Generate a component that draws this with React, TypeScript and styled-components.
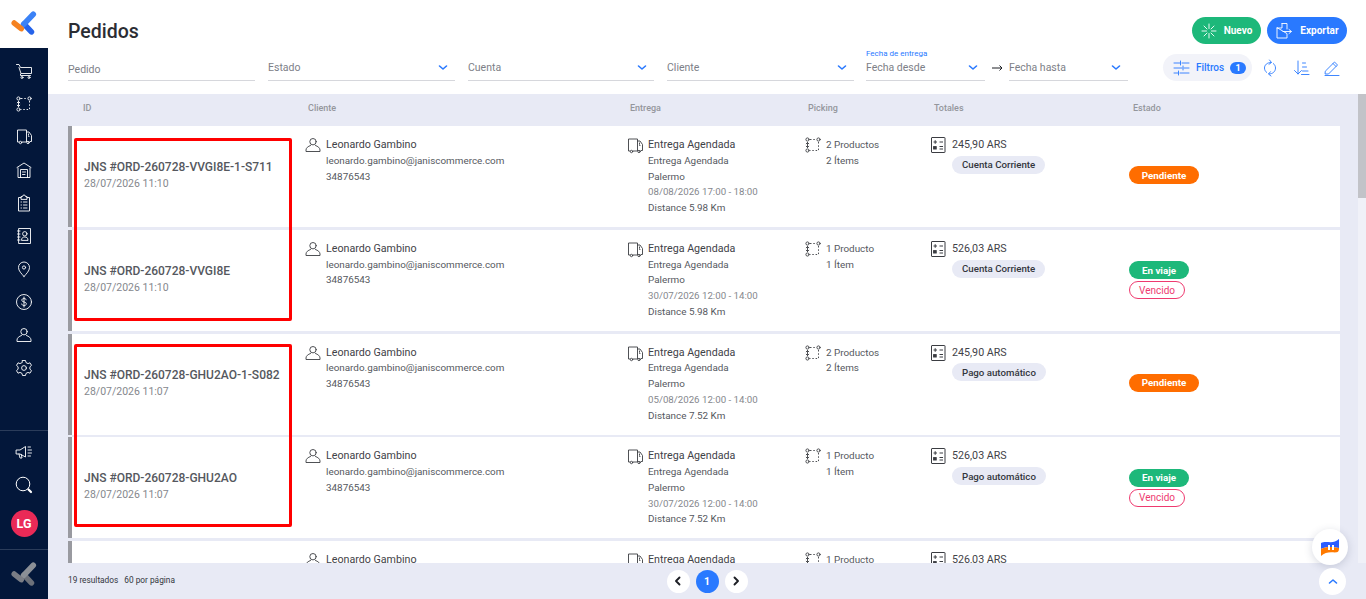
import React from 'react';
import styled, { createGlobalStyle } from 'styled-components';

const GlobalStyle = createGlobalStyle`
  html, body { margin: 0; padding: 0; height: 100%; overflow: hidden; }
  body { font-family: Roboto, "Liberation Sans", sans-serif; color: #55585e; background: #fff; }
  * { box-sizing: border-box; }
`;

interface Order {
  id: string;
  date: string;
  place: string;
  slot: string;
  km: string;
  products: string;
  items: string;
  total: string;
  payment: string;
  status: 'Pendiente' | 'En viaje';
  expired?: boolean;
}

const groups: Order[][] = [
  [
    { id: 'JNS #ORD-260728-VVGI8E-1-S711', date: '28/07/2026 11:10', place: 'Palermo', slot: '08/08/2026 17:00 - 18:00', km: 'Distance 5.98 Km', products: '2 Productos', items: '2 Ítems', total: '245,90 ARS', payment: 'Cuenta Corriente', status: 'Pendiente' },
    { id: 'JNS #ORD-260728-VVGI8E', date: '28/07/2026 11:10', place: 'Palermo', slot: '30/07/2026 12:00 - 14:00', km: 'Distance 5.98 Km', products: '1 Producto', items: '1 Ítem', total: '526,03 ARS', payment: 'Cuenta Corriente', status: 'En viaje', expired: true },
  ],
  [
    { id: 'JNS #ORD-260728-GHU2AO-1-S082', date: '28/07/2026 11:07', place: 'Palermo', slot: '05/08/2026 12:00 - 14:00', km: 'Distance 7.52 Km', products: '2 Productos', items: '2 Ítems', total: '245,90 ARS', payment: 'Pago automático', status: 'Pendiente' },
    { id: 'JNS #ORD-260728-GHU2AO', date: '28/07/2026 11:07', place: 'Palermo', slot: '30/07/2026 12:00 - 14:00', km: 'Distance 7.52 Km', products: '1 Producto', items: '1 Ítem', total: '526,03 ARS', payment: 'Pago automático', status: 'En viaje', expired: true },
  ],
];

const lastOrder: Order = { id: 'JNS #ORD-260728-QWE4RT', date: '28/07/2026 11:02', place: 'Palermo', slot: '30/07/2026 12:00 - 14:00', km: 'Distance 7.52 Km', products: '1 Producto', items: '1 Ítem', total: '526,03 ARS', payment: 'Pago automático', status: 'En viaje' };

const Page = styled.div`
  display: flex;
  height: 100vh;
  width: 100vw;
`;

const Sidebar = styled.nav`
  width: 48px;
  flex: none;
  display: flex;
  flex-direction: column;
  background: #03173a;
`;

const LogoBox = styled.div`
  height: 48px;
  flex: none;
  background: #fff;
  display: flex;
  align-items: center;
  justify-content: center;
`;

const NavList = styled.div`
  flex: 1;
  display: flex;
  flex-direction: column;
  align-items: center;
  padding-top: 6px;
`;

const NavItem = styled.div`
  height: 33px;
  width: 48px;
  flex: none;
  display: flex;
  align-items: center;
  justify-content: center;
  color: #fff;
`;

const NavBottom = styled.div`
  flex: none;
  height: 119px;
  border-top: 1px solid #2b3c5a;
  display: flex;
  flex-direction: column;
  align-items: center;
  padding-top: 4px;
`;

const Avatar = styled.div`
  width: 27px;
  height: 27px;
  margin-top: 9px;
  border-radius: 50%;
  background: #ea2a57;
  color: #fff;
  font-size: 12.5px;
  font-weight: 700;
  display: flex;
  align-items: center;
  justify-content: center;
`;

const NavFoot = styled.div`
  flex: none;
  height: 50px;
  border-top: 1px solid #2b3c5a;
  display: flex;
  align-items: center;
  justify-content: center;
`;

const Main = styled.main`
  flex: 1;
  min-width: 0;
  display: flex;
  flex-direction: column;
  position: relative;
`;

const Header = styled.header`
  height: 94px;
  flex: none;
  background: #fff;
  padding: 17px 19px 0 20px;
`;

const TitleRow = styled.div`
  display: flex;
  justify-content: space-between;
  align-items: center;
  height: 27px;
`;

const Title = styled.h1`
  margin: 0;
  padding-top: 1px;
  font-size: 19.5px;
  font-weight: 500;
  color: #2b2d33;
`;

const Actions = styled.div`
  display: flex;
  gap: 6px;
`;

const ActionButton = styled.button<{ $tone: string; $width: number }>`
  height: 27px;
  width: ${p => p.$width}px;
  border: 0;
  border-radius: 14px;
  background: ${p => p.$tone};
  color: #fff;
  font-family: inherit;
  font-size: 10px;
  font-weight: 700;
  display: flex;
  align-items: center;
  justify-content: center;
  gap: 7px;
  padding: 0;
`;

const FilterRow = styled.div`
  display: flex;
  align-items: flex-end;
  margin-top: 10px;
  height: 27px;
`;

const Field = styled.div<{ $width: number; $gap: number }>`
  position: relative;
  width: ${p => p.$width}px;
  margin-right: ${p => p.$gap}px;
  flex: none;
  height: 27px;
  border-bottom: 1px solid #d6d7dc;
  display: flex;
  align-items: center;
  justify-content: space-between;
  font-size: 10.5px;
  color: #7d8087;
  padding: 0 7px 0 0;
`;

const PlainValue = styled.span`
  padding-top: 4px;
`;

const FieldLabel = styled.span`
  position: absolute;
  left: 0;
  top: -5px;
  font-size: 8px;
  color: #2979ff;
  white-space: nowrap;
`;

const ArrowBox = styled.div`
  width: 24px;
  flex: none;
  height: 27px;
  display: flex;
  align-items: center;
  justify-content: flex-start;
  padding: 0 0 0 7px;
`;

const Tools = styled.div`
  margin: 2px 0 0 35px;
  display: flex;
  align-items: center;
  height: 27px;
`;

const FilterPill = styled.div`
  width: 89px;
  height: 27px;
  margin-right: -4px;
  border-radius: 14px;
  background: #f2f3f9;
  color: #2979ff;
  font-size: 10px;
  font-weight: 500;
  display: flex;
  align-items: center;
  padding-left: 10px;
  gap: 6px;
`;

const Count = styled.span`
  width: 16px;
  height: 12px;
  border-radius: 6px;
  background: #2979ff;
  color: #fff;
  font-size: 9px;
  font-weight: 700;
  display: flex;
  align-items: center;
  justify-content: center;
`;

const ToolIcon = styled.div`
  width: 18px;
  margin-left: 13px;
  display: flex;
  justify-content: center;
  color: #2979ff;
`;

const Body = styled.div`
  flex: 1;
  min-height: 0;
  display: flex;
  background: #e8eaf5;
`;

const Table = styled.div`
  flex: 1;
  min-width: 0;
  display: flex;
  flex-direction: column;
  padding: 0 18px 0 20px;
`;

const columns = '221px 322px 178px 126px 198px 1fr';

const HeadRow = styled.div`
  height: 32px;
  flex: none;
  display: grid;
  grid-template-columns: ${columns};
  align-items: center;
  padding: 0 0 5px 15px;
  font-size: 9px;
  font-weight: 500;
  color: #94969c;
`;

const HeadCell = styled.div<{ $pad: number }>`
  padding-left: ${p => p.$pad}px;
`;

const List = styled.div`
  flex: 1;
  min-height: 0;
  overflow: hidden;
`;

const RowGroup = styled.div`
  position: relative;
`;

const Highlight = styled.div<{ $top: number }>`
  position: absolute;
  left: 6px;
  top: ${p => p.$top}px;
  width: 218px;
  height: 183px;
  border: 3.5px solid #ff0000;
  border-radius: 2px;
  pointer-events: none;
`;

const Row = styled.div`
  height: 101px;
  margin-bottom: 2.75px;
  background: #fff;
  border-left: 4px solid #999aa0;
  display: grid;
  grid-template-columns: ${columns};
  padding-left: 12px;
`;

const IdCell = styled.div`
  display: flex;
  flex-direction: column;
  justify-content: center;
  padding-bottom: 3px;
`;

const OrderId = styled.div`
  font-size: 12px;
  font-weight: 500;
  line-height: 17px;
  color: #55585e;
  white-space: nowrap;
`;

const OrderDate = styled.div`
  font-size: 10.5px;
  line-height: 15px;
  color: #85878d;
`;

const InfoCell = styled.div`
  display: flex;
  padding-top: 11px;
  gap: 5px;
  color: #4d5056;
`;

const CellIcon = styled.div`
  width: 16px;
  flex: none;
  color: #3b3d42;
`;

const Lines = styled.div`
  display: flex;
  flex-direction: column;
  align-items: flex-start;
`;

const Line = styled.div<{ $muted?: boolean; $lead?: boolean }>`
  height: 15.75px;
  line-height: 15.75px;
  font-size: ${p => (p.$lead ? 10.7 : p.$muted ? 9.7 : 9.9)}px;
  color: ${p => (p.$muted ? '#85878d' : p.$lead ? '#3f4248' : '#55585e')};
  white-space: nowrap;
`;

const PayTag = styled.span`
  height: 18px;
  margin-top: 3px;
  padding: 0 10px;
  border-radius: 9px;
  background: #e8eaf5;
  color: #33363d;
  font-size: 9.7px;
  font-weight: 500;
  display: flex;
  align-items: center;
`;

const StatusCell = styled.div<{ $double?: boolean }>`
  display: flex;
  flex-direction: column;
  align-items: flex-start;
  justify-content: center;
  gap: 2px;
  padding-bottom: ${p => (p.$double ? 0 : 3)}px;
`;

const Badge = styled.span<{ $tone: string; $width: number }>`
  width: ${p => p.$width}px;
  height: 18px;
  border-radius: 9px;
  background: ${p => p.$tone};
  color: #fff;
  font-size: 9.8px;
  font-weight: 700;
  display: flex;
  align-items: center;
  justify-content: center;
`;

const Outline = styled.span`
  width: 56px;
  height: 18px;
  border-radius: 9px;
  border: 1px solid #ee3a6f;
  color: #ee3a6f;
  font-size: 10px;
  display: flex;
  align-items: center;
  justify-content: center;
`;

const Scrollbar = styled.div`
  width: 8px;
  flex: none;
  background: #f0f1f8;
`;

const Thumb = styled.div`
  height: 104px;
  background: #c2c3c8;
`;

const Footer = styled.footer`
  height: 36px;
  flex: none;
  background: #e8eaf5;
  padding: 0 20px;
  display: grid;
  grid-template-columns: 1fr auto 1fr;
  align-items: center;
`;

const Summary = styled.div`
  font-size: 8.3px;
  line-height: 12px;
  padding-bottom: 2px;
  color: #33363d;
  display: flex;
  gap: 6px;
`;

const Pager = styled.div`
  display: flex;
  align-items: center;
  gap: 6px;
`;

const PageButton = styled.div<{ $active?: boolean }>`
  width: 23px;
  height: 23px;
  border-radius: 50%;
  background: ${p => (p.$active ? '#2979ff' : '#fff')};
  color: ${p => (p.$active ? '#fff' : '#1d1f25')};
  font-size: 10.5px;
  font-weight: 700;
  display: flex;
  align-items: center;
  justify-content: center;
`;

const ChatBubble = styled.div`
  position: absolute;
  right: 18px;
  bottom: 34px;
  width: 36px;
  height: 36px;
  border-radius: 50%;
  background: #fff;
  box-shadow: 0 2px 8px rgba(40, 50, 90, 0.18);
  display: flex;
  align-items: center;
  justify-content: center;
`;

const TopButton = styled.div`
  position: absolute;
  right: 20px;
  bottom: 4px;
  width: 27px;
  height: 27px;
  border-radius: 50%;
  background: #fff;
  display: flex;
  align-items: center;
  justify-content: center;
`;

const Stroke = ({ size = 18, w, h, children }: { size?: number; w?: number; h?: number; children: React.ReactNode }) => (
  <svg width={w ?? size} height={h ?? size} viewBox={`0 0 ${w ?? size} ${h ?? size}`} fill="none" stroke="currentColor" strokeWidth="0.9" strokeLinecap="round" strokeLinejoin="round">
    {children}
  </svg>
);

const Logo = ({ gray }: { gray?: boolean }) => (
  <svg width="26" height="26" viewBox="0 0 28 28" fill="none" strokeLinecap="round" strokeWidth="6">
    <path d="M14 14 L22 22.5" stroke={gray ? '#6d717a' : '#2563ea'} />
    <path d="M24 3.5 L13.5 14.5" stroke={gray ? '#8b8f96' : '#3b82f6'} />
    <path d="M3.5 13 L11 19" stroke={gray ? '#7a7d85' : '#f58220'} />
  </svg>
);

const Cart = () => (
  <Stroke>
    <path d="M1.5 2.5 H4 L5.5 5.5 H16.5 V11.5 H6 L4 5.5" />
    <path d="M5.5 12 V13.5 H15.5" />
    <circle cx="7" cy="15.5" r="1" /><circle cx="14" cy="15.5" r="1" />
  </Stroke>
);

const Route = () => (
  <Stroke w={16} h={16}>
    <circle cx="2.5" cy="2.5" r="1.6" /><circle cx="13.5" cy="2.5" r="1.6" /><circle cx="2.5" cy="13.5" r="1.6" />
    <path d="M5 2.5 H11 M13.5 5 V13.5 H5" strokeDasharray="1.5 1.8" strokeLinecap="butt" />
    <path d="M2.5 5.5 V10.5 M1.2 6.8 L2.5 5.5 L3.8 6.8 M1.2 9.2 L2.5 10.5 L3.8 9.2" />
  </Stroke>
);

const Truck = () => (
  <Stroke w={17} h={17}>
    <path d="M3 14 H1.5 V2 H10.5 V14 H6" />
    <path d="M10.5 4 H13 L15.5 7.5 V13.5 H14" />
    <path d="M12.5 6 V8.5 H14" strokeDasharray="1 1" />
    <circle cx="4.5" cy="14.5" r="1.2" /><circle cx="12" cy="14.5" r="1.2" />
  </Stroke>
);

const Warehouse = () => (
  <Stroke>
    <path d="M2 6.5 L9 2 L16 6.5 M3 7 V16.5 H15 V7" />
    <path d="M5.5 16.5 V8.5 H12.5 V16.5 M7.5 11 H10.5 M7.5 13.5 H10" />
  </Stroke>
);

const Clipboard = () => (
  <Stroke>
    <path d="M6 3.5 H3.5 V17 H14.5 V3.5 H12" />
    <path d="M6 5 V2.5 H7.5 A1.5 1.5 0 0 1 10.5 2.5 H12 V5 Z" />
    <path d="M8.5 8 H12 M8.5 11 H12 M8.5 14 H12 M6 8 H6.5 M6 11 H6.5 M6 14 H6.5" />
  </Stroke>
);

const Contacts = () => (
  <Stroke>
    <path d="M4 1.5 H15.5 V16.5 H4 Z" />
    <path d="M2.5 4 H5 M2.5 7 H5 M2.5 10 H5 M2.5 13 H5" />
    <circle cx="9.8" cy="6.8" r="2.2" />
    <path d="M6.5 13 C6.5 10.8 8 10 9.8 10 C11.6 10 13 10.8 13 13 Z" />
  </Stroke>
);

const Pin = () => (
  <Stroke>
    <path d="M9 16.5 C6.5 13.5 3.5 11 3.5 7.5 A5.5 5.5 0 0 1 14.5 7.5 C14.5 11 11.5 13.5 9 16.5 Z" />
    <circle cx="9" cy="7.5" r="1.6" />
  </Stroke>
);

const Coin = () => (
  <Stroke>
    <circle cx="9" cy="9" r="7.5" />
    <path d="M11.2 6.8 C11 5.8 10 5.5 9 5.5 C7.8 5.5 6.8 6.1 6.8 7.2 C6.8 9.6 11.4 8.4 11.4 10.8 C11.4 12 10.2 12.5 9 12.5 C7.8 12.5 6.9 12 6.7 11 M9 4 V14" />
  </Stroke>
);

const Person = () => (
  <Stroke w={16} h={16}>
    <circle cx="8" cy="4.7" r="3.2" />
    <path d="M5.5 8.5 C3 9.3 1 11 1 13 V14.5 H15 V13 C15 11 13 9.3 10.5 8.5" />
  </Stroke>
);

const Gear = () => (
  <Stroke>
    <path d="M7.5 1.5 H10.5 L11 3.6 L13 4.6 L15 3.8 L16.5 6.4 L14.9 7.8 V10.2 L16.5 11.6 L15 14.2 L13 13.4 L11 14.4 L10.5 16.5 H7.5 L7 14.4 L5 13.4 L3 14.2 L1.5 11.6 L3.1 10.2 V7.8 L1.5 6.4 L3 3.8 L5 4.6 L7 3.6 Z" />
    <circle cx="9" cy="9" r="2.4" />
  </Stroke>
);

const Megaphone = () => (
  <Stroke>
    <path d="M1.5 7 H5 L10.5 3.5 V14 L5 11 H1.5 Z M4 11 L5 15 H7 L6.3 11.5" />
    <path d="M13 4 H15.5 M13 7 H16.5 M13 10 H16.5 M13 13 H15.5" />
  </Stroke>
);

const Search = () => (
  <svg width="18" height="18" viewBox="0 0 18 18" fill="none" stroke="currentColor">
    <circle cx="8" cy="8" r="6.8" strokeWidth="1" />
    <path d="M13.5 13.5 L16 16" strokeWidth="2.2" strokeLinecap="round" />
  </svg>
);

const Chevron = ({ up, color = '#2979ff', dir }: { up?: boolean; color?: string; dir?: 'l' | 'r' }) => {
  if (dir) {
    return (
      <svg width="8" height="10" viewBox="0 0 8 10" fill="none" stroke={color} strokeWidth="1.9" strokeLinecap="round" strokeLinejoin="round">
        <path d={dir === 'l' ? 'M5.5 1.5 L2 5 L5.5 8.5' : 'M2.5 1.5 L6 5 L2.5 8.5'} />
      </svg>
    );
  }
  return (
    <svg width="10" height="7" viewBox="0 0 10 7" fill="none" stroke={color} strokeWidth="1.6" strokeLinecap="round" strokeLinejoin="round">
      <path d={up ? 'M1.5 5 L5 2 L8.5 5' : 'M1.5 2 L5 5 L8.5 2'} />
    </svg>
  );
};

const Spark = () => (
  <Stroke w={16} h={16}>
    <path d="M8 1 V5.5 M8 10.5 V15 M1 8 H5.5 M10.5 8 H15 M3 3 L6 6 M10 10 L13 13 M13 3 L10 6 M6 10 L3 13" />
  </Stroke>
);

const ExportIcon = () => (
  <Stroke w={18} h={18}>
    <path d="M7 1.5 H12 V7 M12 12 V16 H2 V6 Z" />
    <path d="M7 1.5 V6 H2 M8 9.5 H16 M14 7.5 L16.5 9.5 L14 11.5" />
  </Stroke>
);

const Sliders = () => (
  <Stroke w={17} h={16}>
    <path d="M1 3 H7 M9 3 H16 M1 8 H9 M11 8 H16 M1 13 H5 M7 13 H16" />
    <path d="M7.5 1 V5 M10 6 V10 M5.5 11 V15" />
  </Stroke>
);

const Refresh = () => (
  <Stroke w={14} h={18}>
    <path d="M8 3.5 C4 3.5 1.5 6 1.5 9 C1.5 10.8 2.3 12.4 3.6 13.4" />
    <path d="M6 15 C10 15 12.5 12.3 12.5 9 C12.5 7.2 11.7 5.6 10.4 4.6" />
    <path d="M6.5 1 L8.5 3.5 L6 5.3 M7.5 12.7 L5.5 15 L8 17" />
  </Stroke>
);

const SortIcon = () => (
  <Stroke w={17} h={16}>
    <path d="M5 1 V14 M1.5 10.5 L5 14 L8.5 10.5" />
    <path d="M9.5 3 H12.5 M9.5 7 H13.5 M9.5 11 H15 M8.5 14.5 H16" />
  </Stroke>
);

const Pencil = () => (
  <Stroke w={16} h={16}>
    <path d="M1.5 11 L10.5 2 L13.5 5 L4.5 14 H1.5 Z M9 3.5 L12 6.5" />
    <path d="M1 15.5 H15" />
  </Stroke>
);

const ArrowRight = () => (
  <svg width="11" height="8" viewBox="0 0 11 8" fill="none" stroke="#1d1f25" strokeWidth="1">
    <path d="M0 4 H10 M7.5 1.5 L10 4 L7.5 6.5" />
  </svg>
);

const Calc = () => (
  <svg width="15" height="16" viewBox="0 0 15 16" fill="none" stroke="currentColor" strokeWidth="1">
    <rect x="0.5" y="0.5" width="13.5" height="15" rx="0.5" />
    <path d="M2.5 5 H6 M4.2 3.2 V6.8 M8.5 5 H12 M8.5 9.5 H12 M8.5 12 H12" />
    <rect x="2.6" y="9.6" width="2.6" height="2.4" fill="currentColor" />
  </svg>
);

const Chat = () => (
  <svg width="18" height="17" viewBox="0 0 18 17">
    <path d="M0 4 C5 1 12 6 18 0 V9 C12 8 6 7 0 10 Z" fill="#2b5cff" />
    <path d="M0 10 C6 7 12 8 18 9 C18 13 17 13 14 13.5 C9 13 4 13 0 17 Z" fill="#ff7a00" />
    <rect x="7" y="6" width="2" height="5" fill="#fff" />
    <rect x="11" y="6" width="2" height="5" fill="#fff" />
  </svg>
);

const navIcons = [<Cart />, <Route />, <Truck />, <Warehouse />, <Clipboard />, <Contacts />, <Pin />, <Coin />, <Person />, <Gear />];

function OrderRow({ order }: { order: Order }) {
  return (
    <Row>
      <IdCell>
        <OrderId>{order.id}</OrderId>
        <OrderDate>{order.date}</OrderDate>
      </IdCell>
      <InfoCell>
        <CellIcon><Person /></CellIcon>
        <Lines>
          <Line $lead>Leonardo Gambino</Line>
          <Line>leonardo.gambino@janiscommerce.com</Line>
          <Line>34876543</Line>
        </Lines>
      </InfoCell>
      <InfoCell>
        <CellIcon><Truck /></CellIcon>
        <Lines>
          <Line $lead>Entrega Agendada</Line>
          <Line>Entrega Agendada</Line>
          <Line>{order.place}</Line>
          <Line $muted>{order.slot}</Line>
          <Line>{order.km}</Line>
        </Lines>
      </InfoCell>
      <InfoCell>
        <CellIcon><Route /></CellIcon>
        <Lines>
          <Line>{order.products}</Line>
          <Line>{order.items}</Line>
        </Lines>
      </InfoCell>
      <InfoCell>
        <CellIcon><Calc /></CellIcon>
        <Lines>
          <Line $lead>{order.total}</Line>
          <PayTag>{order.payment}</PayTag>
        </Lines>
      </InfoCell>
      <StatusCell $double={order.expired}>
        {order.status === 'Pendiente'
          ? <Badge $tone="#ff6d00" $width={70}>Pendiente</Badge>
          : <Badge $tone="#1db87a" $width={60}>En viaje</Badge>}
        {order.expired && <Outline>Vencido</Outline>}
      </StatusCell>
    </Row>
  );
}

export default function App() {
  return (
    <Page>
      <GlobalStyle />
      <Sidebar>
        <LogoBox><Logo /></LogoBox>
        <NavList>
          {navIcons.map((icon, i) => <NavItem key={i}>{icon}</NavItem>)}
        </NavList>
        <NavBottom>
          <NavItem><Megaphone /></NavItem>
          <NavItem><Search /></NavItem>
          <Avatar>LG</Avatar>
        </NavBottom>
        <NavFoot><Logo gray /></NavFoot>
      </Sidebar>
      <Main>
        <Header>
          <TitleRow>
            <Title>Pedidos</Title>
            <Actions>
              <ActionButton $tone="#1db87a" $width={69}><Spark />Nuevo</ActionButton>
              <ActionButton $tone="#2979ff" $width={80}><ExportIcon />Exportar</ActionButton>
            </Actions>
          </TitleRow>
          <FilterRow>
            <Field $width={187} $gap={13}><PlainValue>Pedido</PlainValue></Field>
            <Field $width={187} $gap={13}>Estado<Chevron /></Field>
            <Field $width={186} $gap={13}>Cuenta<Chevron /></Field>
            <Field $width={187} $gap={12}>Cliente<Chevron /></Field>
            <Field $width={119} $gap={0}>
              <FieldLabel>Fecha de entrega</FieldLabel>
              Fecha desde<Chevron />
            </Field>
            <ArrowBox><ArrowRight /></ArrowBox>
            <Field $width={119} $gap={0}>Fecha hasta<Chevron /></Field>
            <Tools>
              <FilterPill><Sliders />Filtros<Count>1</Count></FilterPill>
              <ToolIcon><Refresh /></ToolIcon>
              <ToolIcon><SortIcon /></ToolIcon>
              <ToolIcon><Pencil /></ToolIcon>
            </Tools>
          </FilterRow>
        </Header>
        <Body>
          <Table>
            <HeadRow>
              <HeadCell $pad={0}>ID</HeadCell>
              <HeadCell $pad={4}>Cliente</HeadCell>
              <HeadCell $pad={4}>Entrega</HeadCell>
              <HeadCell $pad={4}>Picking</HeadCell>
              <HeadCell $pad={4}>Totales</HeadCell>
              <HeadCell $pad={5}>Estado</HeadCell>
            </HeadRow>
            <List>
              {groups.map((group, i) => (
                <RowGroup key={i}>
                  {group.map(order => <OrderRow key={order.id} order={order} />)}
                  <Highlight $top={i === 0 ? 12 : 10.5} />
                </RowGroup>
              ))}
              <OrderRow order={lastOrder} />
            </List>
          </Table>
          <Scrollbar><Thumb /></Scrollbar>
        </Body>
        <Footer>
          <Summary><span>19 resultados</span><span>60 por página</span></Summary>
          <Pager>
            <PageButton><Chevron dir="l" color="#1d1f25" /></PageButton>
            <PageButton $active>1</PageButton>
            <PageButton><Chevron dir="r" color="#1d1f25" /></PageButton>
          </Pager>
          <span />
        </Footer>
        <ChatBubble><Chat /></ChatBubble>
        <TopButton><Chevron up /></TopButton>
      </Main>
    </Page>
  );
}
